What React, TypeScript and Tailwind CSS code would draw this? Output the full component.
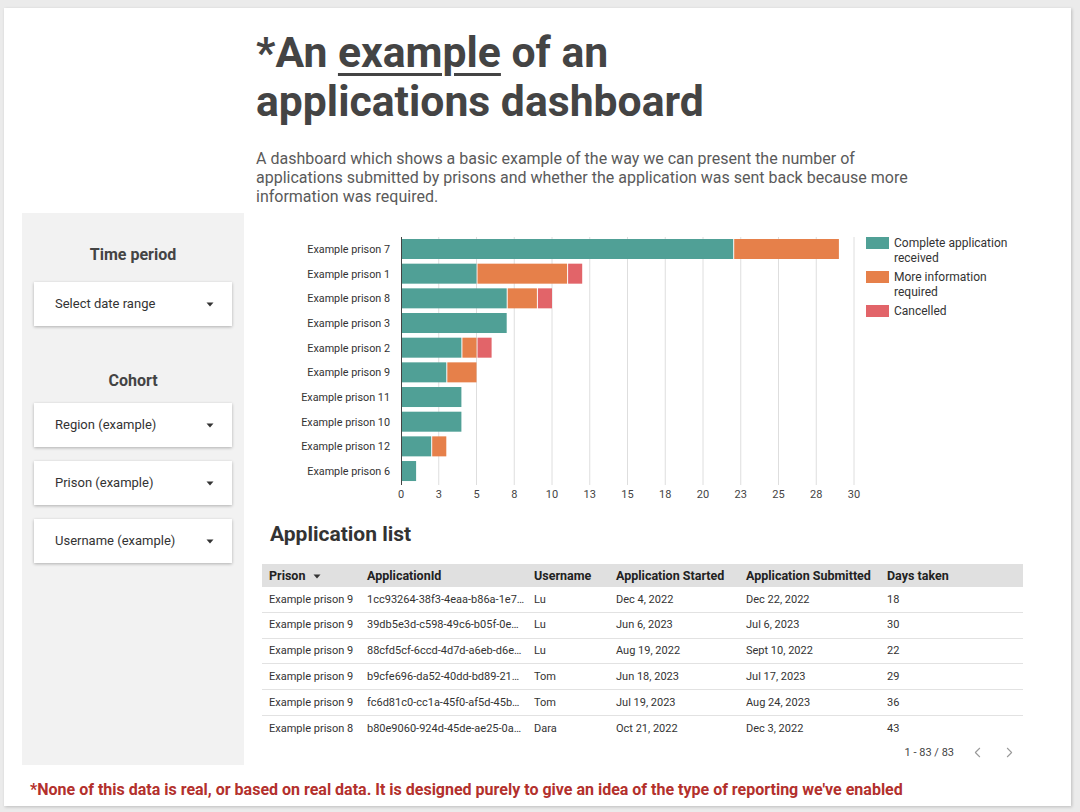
import React from 'react';
import { ChevronLeft, ChevronRight } from 'lucide-react';

const TEAL = '#50a096';
const ORANGE = '#e6804a';
const RED = '#e26469';

// [complete, more info, cancelled]
const prisons: { name: string; v: [number, number, number] }[] = [
  { name: 'Example prison 7', v: [22, 7, 0] },
  { name: 'Example prison 1', v: [5, 6, 1] },
  { name: 'Example prison 8', v: [7, 2, 1] },
  { name: 'Example prison 3', v: [7, 0, 0] },
  { name: 'Example prison 2', v: [4, 1, 1] },
  { name: 'Example prison 9', v: [3, 2, 0] },
  { name: 'Example prison 11', v: [4, 0, 0] },
  { name: 'Example prison 10', v: [4, 0, 0] },
  { name: 'Example prison 12', v: [2, 1, 0] },
  { name: 'Example prison 6', v: [1, 0, 0] },
];

const ticks = ['0', '3', '5', '8', '10', '13', '15', '18', '20', '23', '25', '28', '30'];

const rows = [
  ['Example prison 9', '1cc93264-38f3-4eaa-b86a-1e7…', 'Lu', 'Dec 4, 2022', 'Dec 22, 2022', '18'],
  ['Example prison 9', '39db5e3d-c598-49c6-b05f-0e…', 'Lu', 'Jun 6, 2023', 'Jul 6, 2023', '30'],
  ['Example prison 9', '88cfd5cf-6ccd-4d7d-a6eb-d6e…', 'Lu', 'Aug 19, 2022', 'Sept 10, 2022', '22'],
  ['Example prison 9', 'b9cfe696-da52-40dd-bd89-21…', 'Tom', 'Jun 18, 2023', 'Jul 17, 2023', '29'],
  ['Example prison 9', 'fc6d81c0-cc1a-45f0-af5d-45b…', 'Tom', 'Jul 19, 2023', 'Aug 24, 2023', '36'],
  ['Example prison 8', 'b80e9060-924d-45de-ae25-0a…', 'Dara', 'Oct 21, 2022', 'Dec 3, 2022', '43'],
];

const Caret = () => (
  <svg width="8" height="5" viewBox="0 0 8 5" className="shrink-0">
    <path d="M0.5 0.5 L7.5 0.5 L4 4.5 Z" fill="#333" />
  </svg>
);

const Dropdown = ({ label }: { label: string }) => (
  <div className="mx-[12px] h-[44px] bg-white shadow-[0_1px_3px_rgba(0,0,0,0.28)] flex items-center justify-between pl-[21px] pr-[18px] text-[13px] text-[#333]">
    <span>{label}</span>
    <Caret />
  </div>
);

const X0 = 139;
const S = 15.1;
const rowY = (i: number) => 19 + i * 24.67;

const Chart = () => (
  <div className="flex">
    <svg width="600" height="270" className="shrink-0">
      {ticks.map((t, i) => {
        const x = X0 + i * 37.75;
        return (
          <g key={t}>
            {i > 0 && <line x1={x} x2={x} y1={7} y2={255} stroke="#dedede" strokeWidth={1} />}
            <text x={x} y={268} textAnchor="middle" fontSize="11" fill="#444">{t}</text>
          </g>
        );
      })}
      {prisons.map((p, i) => {
        const cy = rowY(i);
        let start = 0;
        const colors = [TEAL, ORANGE, RED];
        return (
          <g key={p.name}>
            <text x={128} y={cy + 4} textAnchor="end" fontSize="10.8" fill="#333">{p.name}</text>
            {p.v.map((val, k) => {
              if (!val) return null;
              const x = X0 + start * S;
              start += val;
              const w = val * S;
              return <rect key={k} x={x + (k > 0 ? 1 : 0)} y={cy - 10} width={w - (k > 0 ? 1 : 0)} height={20} fill={colors[k]} />;
            })}
          </g>
        );
      })}
      <line x1={X0 + 0.5} x2={X0 + 0.5} y1={7} y2={255} stroke="#444" strokeWidth={1} />
    </svg>
    <div className="ml-[4px] pt-[6px] flex flex-col gap-[4px] text-[12px] leading-[15px] text-[#333]">
      {[
        { c: TEAL, l: ['Complete application', 'received'] },
        { c: ORANGE, l: ['More information', 'required'] },
        { c: RED, l: ['Cancelled'] },
      ].map((it) => (
        <div key={it.l[0]} className="flex gap-[5px]">
          <div className="w-[23px] h-[12px] mt-[1px] shrink-0" style={{ background: it.c }} />
          <div>
            {it.l.map((t) => (
              <div key={t}>{t}</div>
            ))}
          </div>
        </div>
      ))}
    </div>
  </div>
);

const cols = ['w-[98px]', 'w-[167px]', 'w-[82px]', 'w-[130px]', 'w-[141px]', 'flex-1'];
const heads = ['Prison', 'ApplicationId', 'Username', 'Application Started', 'Application Submitted', 'Days taken'];

const Table = () => (
  <div className="w-[761px]">
    <div className="h-[23px] bg-[#e0e0e0] flex items-center pl-[7px] pt-[1px] text-[12.5px] font-bold text-[#222]">
      {heads.map((h, i) => (
        <div key={h} className={`${cols[i]} flex items-center gap-[8px]`}>
          <span>{h}</span>
          {i === 0 && <Caret />}
        </div>
      ))}
    </div>
    {rows.map((r, ri) => (
      <div
        key={ri}
        className={`h-[25.8px] flex items-center pl-[7px] pt-[1px] text-[11px] text-[#333] ${ri < rows.length - 1 ? 'border-b border-[#e2e2e2]' : ''}`}
      >
        {r.map((c, i) => (
          <div key={i} className={cols[i]}>{c}</div>
        ))}
      </div>
    ))}
    <div className="h-[20px] mt-[1px] flex items-center justify-end pr-[5px] text-[11px] text-[#444]">
      <span className="mr-[15px]">1 - 83 / 83</span>
      <ChevronLeft size={17} strokeWidth={1.5} color="#9a9a9a" />
      <ChevronRight size={17} strokeWidth={1.5} color="#9a9a9a" className="ml-[15px]" />
    </div>
  </div>
);

export default function App() {
  return (
    <div className="w-[1080px] h-[812px] bg-[#ebebeb] pt-[8px] pl-[4px] font-['Roboto',sans-serif]">
      <div className="w-[1067px] h-[798px] bg-white shadow-[1px_1px_3px_rgba(0,0,0,0.2)] flex flex-col">
        <div className="ml-[252px] pt-[20px]">
          <h1 className="text-[42.7px] leading-[49px] font-bold text-[#444]">
            *An <span className="underline decoration-[3px] underline-offset-[6px]">example</span> of an
            <br />
            applications dashboard
          </h1>
          <p className="mt-[23px] w-[670px] text-[16px] leading-[19px] text-[#5a5a5a]">
            A dashboard which shows a basic example of the way we can present the number of applications submitted by
            prisons and whether the application was sent back because more information was required.
          </p>
        </div>

        <div className="mt-[7px] flex">
          <div className="ml-[18px] w-[222px] h-[552px] bg-[#f2f2f2] shrink-0">
            <div className="pt-[32px] text-center text-[16px] leading-[20px] font-bold text-[#444]">Time period</div>
            <div className="mt-[17px]">
              <Dropdown label="Select date range" />
            </div>
            <div className="mt-[45px] text-center text-[16px] leading-[20px] font-bold text-[#444]">Cohort</div>
            <div className="mt-[12px] flex flex-col gap-[14px]">
              <Dropdown label="Region (example)" />
              <Dropdown label="Prison (example)" />
              <Dropdown label="Username (example)" />
            </div>
          </div>

          <div className="pl-[18px] pt-[17px]">
            <Chart />
            <h2 className="mt-[20px] ml-[8px] text-[21px] leading-[28px] font-bold text-[#333]">Application list</h2>
            <div className="mt-[16px]">
              <Table />
            </div>
          </div>
        </div>

        <div className="mt-[15px] ml-[26px] text-[16px] leading-[20px] font-bold text-[#b3302c]">
          *None of this data is real, or based on real data. It is designed purely to give an idea of the type of
          reporting we&apos;ve enabled
        </div>
      </div>
    </div>
  );
}
